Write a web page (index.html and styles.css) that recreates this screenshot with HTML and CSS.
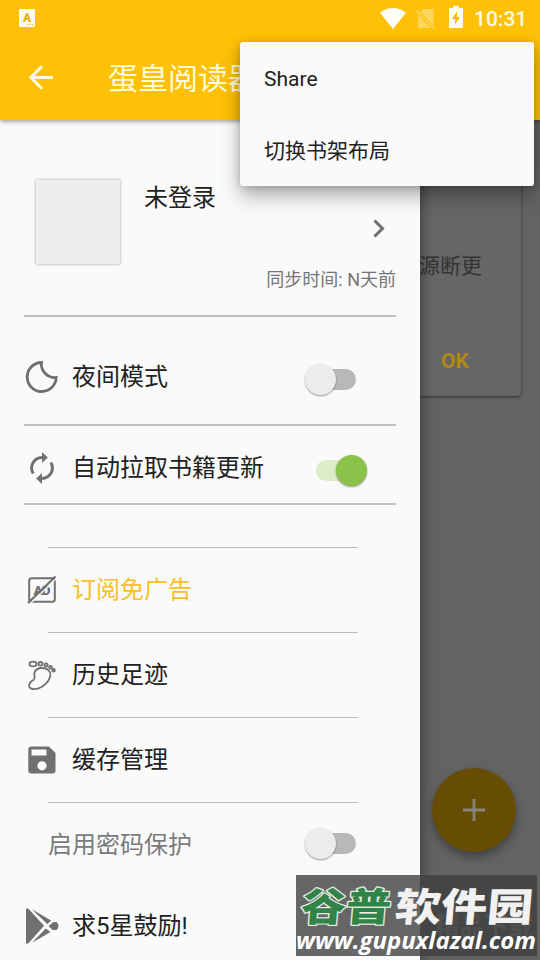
FILE: index.html
```html
<!DOCTYPE html>
<html lang="zh-CN">
<head>
<meta charset="utf-8">
<title>蛋皇阅读器</title>
<link rel="stylesheet" href="styles.css">
</head>
<body>
<div class="screen">
  <header class="appbar">
    <div class="status">
      <svg class="status-app" width="16" height="18" viewBox="0 0 16 18"><rect width="16" height="18" rx="1.2" fill="#fffdf0"/><text x="8" y="13" text-anchor="middle" font-size="12" class="badge-letter">A</text><path d="M8.500 15.700h6" stroke="#ffc107" stroke-width="1.200" stroke-dasharray="1.300 1"/></svg>
      <div class="status-right">
        <svg width="26" height="21" viewBox="0 0 26 21"><path d="M0 4.800C7.600-1.500 18.400-1.500 26 4.800L13 21z" fill="#fffef8"/></svg>
        <svg class="sim" width="20" height="21" viewBox="0 0 20 21"><path d="M7 1h9.500a1 1 0 0 1 1 1v15.500L4.500 4zM2 6.500L15 20H3a1 1 0 0 1-1-1z" fill="#ffd65d"/><path d="M.5 2.500L18.500 20.500" stroke="#ffd65d" stroke-width="1.500"/></svg>
        <svg class="battery" width="14" height="22" viewBox="0 0 14 22"><path d="M4 0h6v2h3a1 1 0 0 1 1 1v18a1 1 0 0 1-1 1H1a1 1 0 0 1-1-1V3a1 1 0 0 1 1-1h3z" fill="#fffef8"/><path d="M8.300 5L3 13h3.200L5.700 19 11 11H7.800z" fill="#f5b906"/></svg>
        <span class="clock">10:31</span>
      </div>
    </div>
    <div class="toolbar">
      <svg width="26" height="26" viewBox="0 0 26 26"><path d="M25 12.500H3M14 1.300L2.800 12.500 14 23.700" fill="none" stroke="#fffbe0" stroke-width="3"/></svg>
      <h1 class="title">蛋皇阅读器</h1>
    </div>
  </header>

  <div class="body">
    <nav class="drawer">
      <section class="profile">
        <div class="avatar"></div>
        <div class="account">
          <span class="name">未登录</span>
          <svg class="chevron" width="12" height="19" viewBox="0 0 12 19"><path d="M1.500 1.500l8 8-8 8" fill="none" stroke="#6f6f6f" stroke-width="3"/></svg>
          <span class="sync">同步时间: N天前</span>
        </div>
      </section>
      <section class="row night">
        <svg class="icon" width="36" height="36" viewBox="0 0 36 36"><path d="M17.500 3.500A14.500 14.500 0 1 0 32.200 18.500 13.500 13.500 0 0 1 17.500 3.500z" fill="none" stroke="#707070" stroke-width="2.800"/></svg>
        <span class="label">夜间模式</span>
        <span class="switch"></span>
      </section>
      <section class="row auto">
        <svg class="icon" width="36" height="36" viewBox="0 0 36 36"><path d="M9.200 23.500A10.500 10.500 0 0 1 18 7.500M26.800 12.500A10.500 10.500 0 0 1 18 28.500" fill="none" stroke="#707070" stroke-width="3"/><path d="M18 2v11l5.800-5.500zM18 34V23l-5.800 5.500z" fill="#707070"/></svg>
        <span class="label">自动拉取书籍更新</span>
        <span class="switch on"></span>
      </section>
      <section class="item first">
        <svg class="icon" width="36" height="36" viewBox="0 0 36 36"><rect x="5.200" y="6.200" width="25.600" height="23.600" rx="2.500" fill="none" stroke="#707070" stroke-width="2"/><text x="9.500" y="22.800" font-size="13.500" class="ad-letter" textLength="17">AD</text><path d="M5.800 32L33 6" stroke="#fafafa" stroke-width="1.200"/><path d="M4 31L31.500 4.500" stroke="#707070" stroke-width="2.200"/></svg>
        <span class="label gold">订阅免广告</span>
      </section>
      <section class="item">
        <svg class="icon" width="36" height="36" viewBox="0 0 36 36"><g fill="none" stroke="#707070" stroke-width="1.800"><path d="M10.500 15.500c1.500-3.500 5.500-5 9.500-4.300 4.500.8 7.300 4 6.300 8-1.500 5.500-6.300 10.500-11.800 12.200-4 1.200-8.500 1-9.300-1.900-.8-3.200 1.500-5 4.500-6.800 2.500-2-.2-4.200.8-7.200z"/><ellipse cx="9" cy="7" rx="3.500" ry="2.400"/><ellipse cx="16.500" cy="6.800" rx="2" ry="1.800"/><circle cx="22" cy="8" r="1.600"/><circle cx="26.500" cy="10.200" r="1.400"/><circle cx="29.600" cy="13.300" r="1.300"/></g></svg>
        <span class="label">历史足迹</span>
      </section>
      <section class="item">
        <svg class="icon" width="36" height="36" viewBox="0 0 36 36"><path fill-rule="evenodd" d="M7.300 4.500H25l6.500 6.500v17.500a3 3 0 0 1-3 3H7.300a3 3 0 0 1-3-3v-21a3 3 0 0 1 3-3zM7.500 7.500v6h15v-6zM18 19.200a4.600 4.600 0 1 0 0 9.200 4.600 4.600 0 0 0 0-9.200z" fill="#707070"/></svg>
        <span class="label">缓存管理</span>
      </section>
      <section class="item password">
        <span class="label muted">启用密码保护</span>
        <span class="switch"></span>
      </section>
      <section class="row rate">
        <svg class="icon" width="36" height="40" viewBox="0 0 36 40"><g fill="#707070"><path d="M2 3.500Q2 2 3.700 2.200L6 4.500 20 19.800 4.500 37.300Q2 38.500 2 36.500z"/><path d="M8 3.200L27 14.500 23.500 18.200zM8 36.800L21.800 22.500 26.500 26z"/><path d="M29.500 16h3q2 2 2 4t-2 4h-4L24.500 20z"/></g></svg>
        <span class="label">求5星鼓励!</span>
      </section>
    </nav>

    <main class="shelf">
      <article class="notice">
        <p class="notice-text">源断更</p>
        <span class="ok">OK</span>
      </article>
      <div class="fab"><svg width="22" height="22" viewBox="0 0 22 22"><path d="M11 0v22M0 11h22" stroke="#85857c" stroke-width="2.800"/></svg></div>
    </main>
  </div>

  <div class="menu">
    <div class="menu-item">Share</div>
    <div class="menu-item cjk">切换书架布局</div>
  </div>

  <div class="watermark">
    <svg width="242" height="81" viewBox="0 0 242 81">
      <text class="ghost" x="139" y="61" textLength="98" lengthAdjust="spacingAndGlyphs">精品下载</text>
      <text class="brand green" transform="translate(4 46) skewX(-5)" textLength="90" lengthAdjust="spacingAndGlyphs">谷普</text>
      <text class="brand white" transform="translate(98 46) skewX(-5)" textLength="138" lengthAdjust="spacingAndGlyphs">软件园</text>
      <text class="url" x="0" y="74" textLength="240" lengthAdjust="spacingAndGlyphs">www.gupuxlazal.com</text>
    </svg>
  </div>
</div>
</body>
</html>
```
FILE: styles.css
```css
* { box-sizing: border-box; }
body {
  margin: 0;
  font-family: Roboto, "Noto Sans CJK SC", sans-serif;
  color: #212121;
}
svg { display: block; flex: none; }
.screen {
  position: relative;
  width: 540px;
  height: 960px;
  overflow: hidden;
  display: flex;
  flex-direction: column;
  background: #fafafa;
}
.appbar {
  position: relative;
  z-index: 2;
  height: 120px;
  flex: none;
  background: #ffc107;
  box-shadow: 0 1px 5px rgba(0, 0, 0, .45);
}
.status {
  height: 36px;
  padding: 0 12px 0 19px;
  display: flex;
  align-items: center;
  justify-content: space-between;
}
.status-right { display: flex; align-items: center; }
.sim { margin-left: 10px; }
.battery { margin: -2px 11px 0 13px; }
.clock {
  width: 54px;
  font-size: 21px;
  line-height: 36px;
  font-weight: 500;
  color: #fffbe0;
  padding-top: 1px;
}
.badge-letter { font-family: Roboto, sans-serif; font-weight: 900; fill: #eab010; }
.toolbar {
  height: 84px;
  padding-left: 28px;
  display: flex;
  align-items: center;
  gap: 54px;
}
.title {
  margin: 2px 0 0;
  font-size: 30px;
  line-height: 40px;
  font-weight: 400;
  color: #fffbd8;
}
.body { flex: 1; display: flex; min-height: 0; }
.drawer {
  position: relative;
  z-index: 1;
  width: 420px;
  flex: none;
  padding: 0 24px;
  background: #fafafa;
  box-shadow: 2px 0 12px rgba(0, 0, 0, .4);
  overflow: hidden;
}
.profile {
  height: 197px;
  padding: 60px 0 0 12px;
  display: flex;
  gap: 24px;
  border-bottom: 2px solid #c1c1c1;
}
.avatar {
  width: 84px;
  height: 84px;
  background: #eee;
  box-shadow: 0 0 3px rgba(0, 0, 0, .35);
}
.account { flex: 1; display: flex; flex-direction: column; }
.name { font-size: 24px; line-height: 36px; }
.chevron { align-self: flex-end; margin: 3px 11px 0 0; }
.sync {
  align-self: flex-end;
  margin-top: 29px;
  font-size: 18px;
  line-height: 26px;
  color: #757575;
}
.row, .item { display: flex; align-items: center; }
.icon { margin-right: 12px; }
.label { font-size: 24px; line-height: 36px; white-space: nowrap; }
.gold { color: #f9c026; }
.muted { color: #7a7a7a; }
.row { border-bottom: 2px solid #c1c1c1; }
.night { height: 109px; padding: 13px 37px 0 0; }
.auto { height: 79px; padding: 7px 33px 0 0; }
.item { height: 85px; position: relative; border-top: 1px solid transparent; }
.item::before {
  content: "";
  position: absolute;
  top: -1px;
  left: 24px;
  width: 310px;
  height: 1px;
  background: #bdbdbd;
}
.first { margin-top: 42px; }
.password { padding: 0 37px 0 24px; }
.rate { height: 77px; border: 0; }
.switch {
  position: relative;
  margin: 4px 3px 0 auto;
  width: 44px;
  height: 21px;
  border-radius: 11px;
  background: #b8b8b8;
}
.password .switch { margin-top: -3px; }
.switch::after {
  content: "";
  position: absolute;
  top: -5px;
  left: -7px;
  width: 31px;
  height: 31px;
  border-radius: 50%;
  background: #ececec;
  box-shadow: 0 1px 2px rgba(0, 0, 0, .4);
}
.switch.on { background: #dcedc8; }
.switch.on::after { left: 20px; background: #8bc34a; }
.shelf {
  flex: 1;
  display: flex;
  flex-direction: column;
  justify-content: space-between;
  background: #636363;
}
.notice {
  width: 101px;
  height: 276px;
  padding: 130px 0 0;
  background: #666;
  border-radius: 0 0 4px 0;
  box-shadow: 0 1px 3px rgba(0, 0, 0, .5);
}
.notice-text { margin: 0 0 0 -1px; font-size: 21px; line-height: 32px; color: #333; }
.ok {
  display: block;
  margin: 66px 0 0 21px;
  font-size: 21px;
  line-height: 26px;
  font-weight: 700;
  color: #b08a14;
}
.fab {
  width: 84px;
  height: 84px;
  margin: 0 0 108px 12px;
  border-radius: 50%;
  display: flex;
  align-items: center;
  justify-content: center;
  background: #664d03;
  box-shadow: 0 5px 10px rgba(0, 0, 0, .35);
}
.menu {
  position: absolute;
  z-index: 3;
  left: 240px;
  top: 42px;
  width: 294px;
  height: 144px;
  border-radius: 3px;
  background: #fafafa;
  box-shadow: 0 10px 20px rgba(0, 0, 0, .3), 0 1px 8px rgba(0, 0, 0, .18);
}
.menu-item {
  height: 72px;
  padding: 1px 24px 0;
  display: flex;
  align-items: center;
  font-size: 21px;
}
.cjk { padding: 0 24px 3px; }
.watermark {
  position: absolute;
  z-index: 4;
  left: 296px;
  top: 875px;
  width: 241px;
  height: 81px;
  overflow: hidden;
  background: linear-gradient(90deg, #666 0 124px, #454545 124px);
}
.brand {
  font-family: "Noto Sans CJK SC", sans-serif;
  font-weight: 900;
  font-size: 39px;
  paint-order: stroke;
  stroke-linejoin: round;
}
.green { fill: #318348; stroke: #e4eee4; stroke-width: 2.5px; }
.white { fill: #f1f1f1; }
.url {
  font-family: "Open Sans", sans-serif;
  font-size: 24px;
  font-weight: 700;
  font-style: italic;
  fill: #fff;
}
.ghost { font-family: "Noto Sans CJK SC", sans-serif; font-size: 26px; font-weight: 700; fill: #505050; }
.ad-letter { font-family: Roboto, sans-serif; font-weight: 900; fill: #707070; }
```
